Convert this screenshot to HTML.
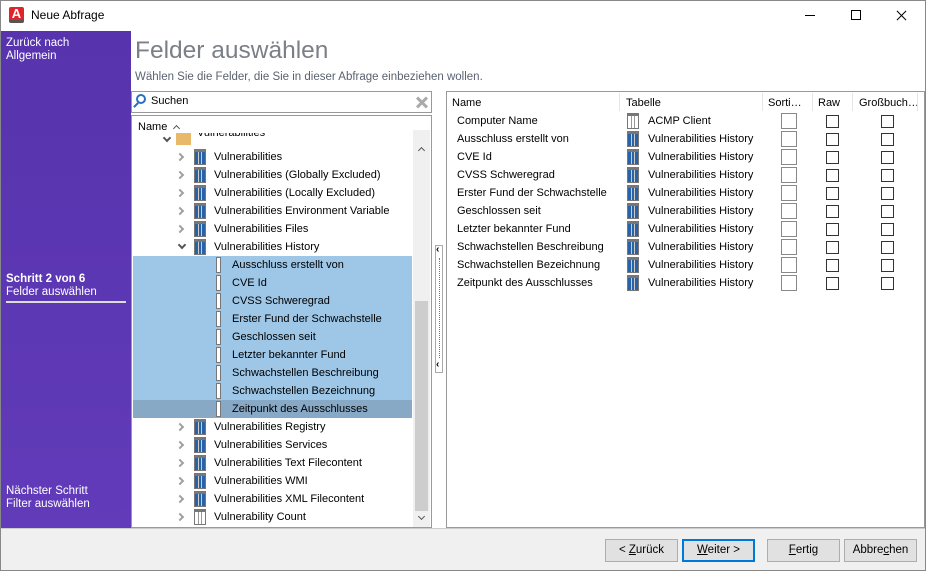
<!DOCTYPE html>
<html><head><meta charset="utf-8"><style>
*{box-sizing:border-box;margin:0;padding:0}
body{width:926px;height:571px;position:relative;overflow:hidden;background:#fff;font-family:"Liberation Sans",sans-serif;font-size:11px;color:#000}
.a{position:absolute}
.win{left:0;top:0;width:926px;height:571px;border:1px solid #888}
.side{left:1px;top:31px;width:130px;height:497px;background:linear-gradient(#5733ad,#613bb9);color:#fff;font-size:11.5px;line-height:13px}
.t{white-space:nowrap}
.tbl{width:12px;height:16px;border:1px solid #777;background:#2a62a8;background-image:linear-gradient(90deg,#2a62a8 3px,#ccc 3px,#ccc 4px,#2a62a8 4px,#2a62a8 6px,#ccc 6px,#ccc 7px,#2a62a8 7px);border-top:3px solid #777}
.tblw{width:12px;height:16px;border:1px solid #777;border-top:3px solid #777;background:linear-gradient(90deg,#fff 3px,#999 3px,#999 4px,#fff 4px,#fff 6px,#999 6px,#999 7px,#fff 7px)}
.fld{width:5px;height:16px;border:1px solid #777;background:#fff}
.chv{width:6px;height:6px;border-right:2px solid #a0a0a0;border-bottom:2px solid #a0a0a0}
.cb{width:13px;height:13px;border:1px solid #333;background:#fff}
.btn{top:539px;width:73px;height:23px;border:1px solid #adadad;background:#e1e1e1;text-align:center;line-height:21px;font-size:11.5px}
</style></head><body>
<div class="a win"></div>
<div class="a" style="left:9px;top:7px;width:15px;height:16px;background:#e0242a;border-radius:2px;border-bottom:3px solid #555;color:#fff;font-weight:bold;font-size:13px;line-height:13px;text-align:center">A</div>
<div class="a t" style="left:31px;top:8px;font-size:12px">Neue Abfrage</div>
<div class="a" style="left:805px;top:15px;width:10px;height:1px;background:#000"></div>
<div class="a" style="left:851px;top:10px;width:10px;height:10px;border:1px solid #000"></div>
<div class="a" style="left:895px;top:15px;width:13px;height:1px;background:#000;transform:rotate(45deg)"></div>
<div class="a" style="left:895px;top:15px;width:13px;height:1px;background:#000;transform:rotate(-45deg)"></div>
<div class="a side">
<div class="a t" style="left:5px;top:6px">Zurück nach<br>Allgemein</div>
<div class="a t" style="left:5px;top:242px"><b>Schritt 2 von 6</b><br>Felder auswählen</div>
<div class="a" style="left:5px;top:270px;width:120px;height:2px;background:#ddd"></div>
<div class="a t" style="left:5px;top:454px">Nächster Schritt<br>Filter auswählen</div>
</div>
<div class="a t" style="left:135px;top:37px;font-size:24.5px;color:#7b7f86">Felder auswählen</div>
<div class="a t" style="left:135px;top:71px;font-size:11.5px;color:#5a6270">Wählen Sie die Felder, die Sie in dieser Abfrage einbeziehen wollen.</div>
<div class="a" style="left:131px;top:91px;width:301px;height:22px;border:1px solid #999"></div>
<div class="a" style="left:136px;top:94px;width:10px;height:10px;border:2px solid #2a6fc0;border-radius:50%"></div>
<div class="a" style="left:133px;top:104px;width:6px;height:2px;background:#2a6fc0;transform:rotate(-45deg)"></div>
<div class="a t" style="left:151px;top:95px">Suchen</div>
<div class="a" style="left:415px;top:101px;width:14px;height:3px;background:#aaa;transform:rotate(45deg)"></div>
<div class="a" style="left:415px;top:101px;width:14px;height:3px;background:#aaa;transform:rotate(-45deg)"></div>
<div class="a" style="left:131px;top:115px;width:301px;height:413px;border:1px solid #999;overflow:hidden">
 <div class="a" style="left:281px;top:14px;width:17px;height:397px;background:#f0f0f0"></div>
 <div class="a" style="left:283px;top:185px;width:13px;height:210px;background:#cdcdcd"></div>
 <div class="a" style="left:287px;top:32px;width:5px;height:5px;border-left:1.5px solid #555;border-top:1.5px solid #555;transform:rotate(45deg)"></div>
 <div class="a" style="left:287px;top:398px;width:5px;height:5px;border-right:1.5px solid #555;border-bottom:1.5px solid #555;transform:rotate(45deg)"></div>
 <div class="a" style="left:1px;top:140px;width:279px;height:144px;background:#9dc6e7"></div>
 <div class="a" style="left:1px;top:284px;width:279px;height:18px;background:#87a9c6"></div>
</div>
<div class="a" style="left:132px;top:116px;width:280px;height:17px;background:#fff"></div>
<div class="a t" style="left:138px;top:121px">Name</div>
<div class="a" style="left:174px;top:126px;width:5px;height:5px;border-left:1px solid #555;border-top:1px solid #555;transform:rotate(45deg)"></div>
<div class="a" style="left:132px;top:133px;width:280px;height:12px;overflow:hidden">
 <div class="a" style="left:32px;top:2px;width:6px;height:6px;border-right:2px solid #555;border-bottom:2px solid #555;transform:rotate(45deg)"></div>
 <div class="a" style="left:44px;top:0;width:15px;height:12px;background:#e9b96a"></div>
 <div class="a t" style="left:65px;top:-6px">Vulnerabilities</div>
</div>
<div id="rows"></div>
<div class="a" style="left:435px;top:245px;width:8px;height:128px;border:1px solid #aaa"></div>
<div class="a" style="left:439px;top:258px;width:0;height:100px;border-left:1px dotted #3a7fd0"></div>
<div class="a t" style="left:436px;top:244px;font-size:10px;font-weight:bold">‹</div>
<div class="a t" style="left:436px;top:359px;font-size:10px;font-weight:bold">‹</div>
<div class="a" style="left:446px;top:91px;width:479px;height:437px;border:1px solid #999"></div>
<div class="a t" style="left:452px;top:97px">Name</div>
<div class="a" style="left:619px;top:93px;width:1px;height:18px;background:#e5e5e5"></div>
<div class="a t" style="left:626px;top:97px">Tabelle</div>
<div class="a" style="left:762px;top:93px;width:1px;height:18px;background:#e5e5e5"></div>
<div class="a t" style="left:768px;top:97px">Sorti…</div>
<div class="a" style="left:812px;top:93px;width:1px;height:18px;background:#e5e5e5"></div>
<div class="a t" style="left:818px;top:97px">Raw</div>
<div class="a" style="left:852px;top:93px;width:1px;height:18px;background:#e5e5e5"></div>
<div class="a t" style="left:859px;top:97px">Großbuch…</div>
<div class="a" style="left:917px;top:93px;width:1px;height:18px;background:#e5e5e5"></div>
<div id="rr"></div>
<div class="a" style="left:1px;top:528px;width:924px;height:42px;background:#f0f0f0;border-top:1px solid #ccc"></div>
<div class="a btn" style="left:605px">&lt; <u>Z</u>urück</div>
<div class="a btn" style="left:682px;border:2px solid #0078d7;line-height:19px"><u>W</u>eiter &gt;</div>
<div class="a btn" style="left:767px"><u>F</u>ertig</div>
<div class="a btn" style="left:844px">Abbre<u>c</u>hen</div>
<script>
var tree=[["t","Vulnerabilities"],["t","Vulnerabilities (Globally Excluded)"],["t","Vulnerabilities (Locally Excluded)"],["t","Vulnerabilities Environment Variable"],["t","Vulnerabilities Files"],["o","Vulnerabilities History"],["f","Ausschluss erstellt von"],["f","CVE Id"],["f","CVSS Schweregrad"],["f","Erster Fund der Schwachstelle"],["f","Geschlossen seit"],["f","Letzter bekannter Fund"],["f","Schwachstellen Beschreibung"],["f","Schwachstellen Bezeichnung"],["f","Zeitpunkt des Ausschlusses"],["t","Vulnerabilities Registry"],["t","Vulnerabilities Services"],["t","Vulnerabilities Text Filecontent"],["t","Vulnerabilities WMI"],["t","Vulnerabilities XML Filecontent"],["w","Vulnerability Count"]];
var h="";tree.forEach(function(r,i){var y=148+i*18;
if(r[0]=="f"){h+='<div class="a fld" style="left:216px;top:'+(y+1)+'px"></div><div class="a t" style="left:232px;top:'+(y+3)+'px">'+r[1]+'</div>';}
else{h+=(r[0]=="o"?'<div class="a chv" style="left:179px;top:'+(y+4)+'px;transform:rotate(45deg);border-color:#555"></div>':'<div class="a chv" style="left:177px;top:'+(y+6)+'px;transform:rotate(-45deg)"></div>')+'<div class="a '+(r[0]=="w"?'tblw':'tbl')+'" style="left:194px;top:'+(y+1)+'px"></div><div class="a t" style="left:214px;top:'+(y+3)+'px">'+r[1]+'</div>';}
});document.getElementById("rows").innerHTML=h;
var rn=["Computer Name","Ausschluss erstellt von","CVE Id","CVSS Schweregrad","Erster Fund der Schwachstelle","Geschlossen seit","Letzter bekannter Fund","Schwachstellen Beschreibung","Schwachstellen Bezeichnung","Zeitpunkt des Ausschlusses"];
h="";rn.forEach(function(n,i){var y=115+i*18;
h+='<div class="a t" style="left:457px;top:'+y+'px">'+n+'</div><div class="a '+(i?'tbl':'tblw')+'" style="left:627px;top:'+(y-2)+'px"></div><div class="a t" style="left:648px;top:'+y+'px">'+(i?'Vulnerabilities History':'ACMP Client')+'</div><div class="a cb" style="left:781px;top:'+(y-2)+'px;width:16px;height:16px;border-color:#888"></div><div class="a cb" style="left:826px;top:'+y+'px"></div><div class="a cb" style="left:881px;top:'+y+'px"></div>';});
document.getElementById("rr").innerHTML=h;
</script>
</body></html>
